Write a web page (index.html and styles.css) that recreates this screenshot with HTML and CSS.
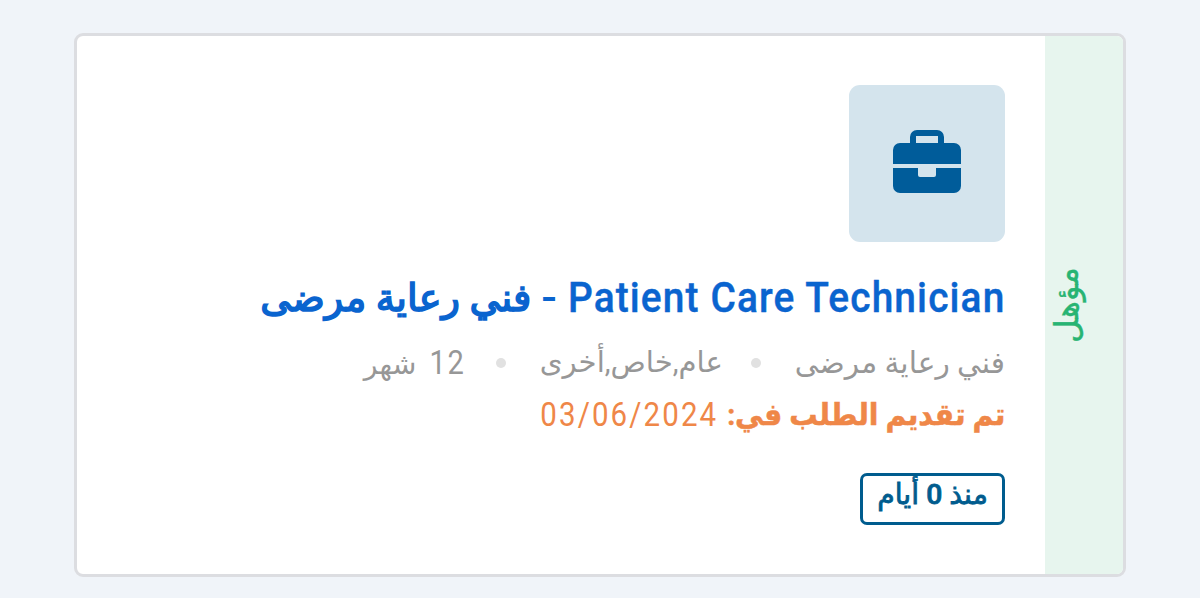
FILE: index.html
```html
<!DOCTYPE html>
<html lang="ar" dir="rtl">
<head>
<meta charset="utf-8">
<title>Patient Care Technician</title>
<link rel="stylesheet" href="styles.css">
</head>
<body>
<article class="card">
  <aside class="status"><span class="status-text">مؤهل</span></aside>
  <div class="content">
    <div class="icon-box">
      <svg class="briefcase" viewBox="0 0 68 63" aria-hidden="true">
        <path fill-rule="evenodd" d="M17 13V7a7 7 0 0 1 7-7h20a7 7 0 0 1 7 7v6h10a7 7 0 0 1 7 7v14H0V20a7 7 0 0 1 7-7ZM23 6v7h22V6ZM0 38h25v7a2 2 0 0 0 2 2h14a2 2 0 0 0 2-2v-7h25v18a7 7 0 0 1-7 7H7a7 7 0 0 1-7-7Z"/>
      </svg>
    </div>
    <h1 class="title"><span class="title-en" dir="ltr">Patient Care Technician</span><span class="dash">-</span><span class="title-ar">فني رعاية مرضى</span></h1>
    <div class="meta">
      <span class="role">فني رعاية مرضى</span><i class="dot"></i><span class="sector">عام,خاص,أخرى</span><i class="dot"></i><span class="period"><span class="count">12</span> شهر</span>
    </div>
    <div class="applied"><b class="applied-label">تم تقديم الطلب في:</b><span class="date" dir="ltr">03/06/2024</span></div>
    <div class="badge"><span class="badge-text">منذ <span class="days">0</span> أيام</span></div>
  </div>
</article>
</body>
</html>
```
FILE: styles.css
```css
* { box-sizing: border-box; }
body {
  margin: 0;
  height: 598px;
  padding: 33px 74px 21px;
  overflow: hidden;
  background: #f0f4f9;
  font-family: Roboto, "DejaVu Sans", sans-serif;
}
.card {
  display: flex;
  height: 544px;
  border: 3px solid #dcdde1;
  border-radius: 9px;
  background: #fff;
  overflow: hidden;
}
.status {
  flex: 0 0 78px;
  display: flex;
  align-items: center;
  padding-right: 38px;
  background: #e7f5ee;
  color: #28b473;
}
.status-text {
  writing-mode: vertical-rl;
  transform: rotate(180deg);
  font-size: 32.5px;
  line-height: 36px;
  -webkit-text-stroke: 0.4px;
}
.content {
  flex: 1;
  padding: 49px 40px 0 0;
  display: flex;
  flex-direction: column;
  align-items: flex-start;
  white-space: nowrap;
}
.icon-box {
  width: 156px;
  height: 157px;
  display: flex;
  justify-content: center;
  padding-top: 45px;
  border-radius: 11px;
  background: #d4e4ed;
}
.briefcase { width: 68px; height: 63px; fill: #005c9a; }
.title {
  display: flex;
  margin: 28px 0 0;
  height: 56px;
  line-height: 56px;
  font-size: 42px;
  font-weight: 500;
  color: #0a64cf;
}
.title-en {
  letter-spacing: 1.2px;
  margin-left: -35px;
  transform: scaleX(.926);
  transform-origin: right;
  -webkit-text-stroke: 0.4px;
}
.dash { margin: 0 11px; transform: scaleX(1.1); }
.title-ar { font-size: 38.3px; font-weight: 400; -webkit-text-stroke: 1.6px; }
.meta {
  display: flex;
  align-items: center;
  height: 44px;
  margin-top: 14px;
  font-size: 30px;
  color: #979797;
}
.role { font-size: 29.7px; }
.sector { font-size: 29.2px; }
.period { font-size: 28.5px; }
.count {
  display: inline-block;
  margin-left: 3px;
  font-size: 33px;
  letter-spacing: 2px;
  transform: scaleX(.88);
}
.dot { width: 10px; height: 10px; margin: 2px 34px 0 28px; border-radius: 50%; background: #e1e1e1; }
.applied {
  display: flex;
  height: 44px;
  line-height: 44px;
  gap: 8px;
  margin-top: 9px;
  font-size: 30px;
  color: #ef8748;
}
.applied-label {
  margin-left: -17px;
  transform: scaleX(.942);
  transform-origin: right;
  -webkit-text-stroke: 0.5px;
}
.date {
  font-size: 33.5px;
  letter-spacing: 2.4px;
  transform: scaleX(.88);
  transform-origin: right;
}
.badge {
  display: flex;
  justify-content: center;
  width: 145px;
  height: 52px;
  margin-top: 36px;
  border: 3px solid #005c8e;
  border-radius: 7px;
  line-height: 38px;
  font-size: 28.3px;
  color: #005c8e;
}
.badge-text { -webkit-text-stroke: 0.8px; }
.days { font-weight: 500; }
```
